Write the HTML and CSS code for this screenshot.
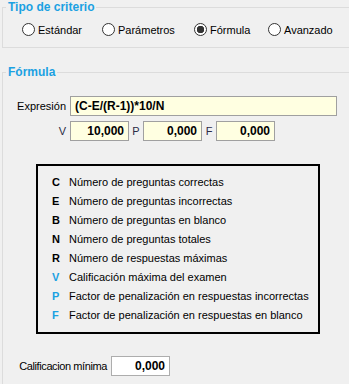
FILE: index.html
```html
<!DOCTYPE html>
<html lang="es">
  <head>
    <title>Criterio de calificación</title>
    <link rel="stylesheet" href="styles.css">
  </head>
  <body>
    <fieldset class="group group-type">
      <legend>Tipo de criterio</legend>
      <div class="radios">
        <label class="radio"><input type="radio" name="tipo" /> Estándar</label>
        <label class="radio"><input type="radio" name="tipo" /> Parámetros</label>
        <label class="radio"><input type="radio" name="tipo" checked /> Fórmula</label>
        <label class="radio"><input type="radio" name="tipo" /> Avanzado</label>
      </div>
    </fieldset>

    <fieldset class="group group-formula">
      <legend>Fórmula</legend>
      <div class="row row-expr">
        <span class="label">Expresión</span>
        <div class="field field-expr">(C-E/(R-1))*10/N</div>
      </div>
      <div class="row row-vars">
        <span class="label label-var">V</span>
        <div class="field field-num">10,000</div>
        <span class="var-label">P</span>
        <div class="field field-num">0,000</div>
        <span class="var-label">F</span>
        <div class="field field-num">0,000</div>
      </div>

      <div class="terms">
        <div class="term"><span class="term-key">C</span>Número de preguntas correctas</div>
        <div class="term"><span class="term-key">E</span>Número de preguntas incorrectas</div>
        <div class="term"><span class="term-key">B</span>Número de preguntas en blanco</div>
        <div class="term"><span class="term-key">N</span>Número de preguntas totales</div>
        <div class="term"><span class="term-key">R</span>Número de respuestas máximas</div>
        <div class="term"><span class="term-key blue">V</span>Calificación máxima del examen</div>
        <div class="term"><span class="term-key blue">P</span>Factor de penalización en respuestas incorrectas</div>
        <div class="term"><span class="term-key blue">F</span>Factor de penalización en respuestas en blanco</div>
      </div>

      <div class="row row-min">
        <span class="label label-min">Calificacion mínima</span>
        <div class="field field-num field-white">0,000</div>
      </div>
    </fieldset>
  </body>
</html>
```

FILE: styles.css
```css
body {
  margin: 0;
  width: 349px;
  height: 384px;
  overflow: hidden;
  background-color: #f0f0f0;
  font-family: "Liberation Sans", Arial, sans-serif;
  font-size: 11px;
  color: #000;
}

.group {
  margin: 0 0 0 2px;
  padding: 0;
  border: 1px solid #dcdcdc;
  width: 360px;
  min-width: 0;
  box-sizing: border-box;
}

.group legend {
  margin-left: 3px;
  padding: 0 2px;
  font: bold 12px/14px "Liberation Sans", Arial, sans-serif;
  color: #1ba1e2;
}

.radios {
  display: grid;
  grid-template-columns: 80px 92px 74px auto;
  padding: 8px 0 10px 19px;
}

.radio {
  display: flex;
  align-items: center;
  gap: 3px;
  height: 15px;
}

.radio input {
  appearance: none;
  margin: 0;
  width: 13px;
  height: 13px;
  border: 1px solid #333;
  border-radius: 50%;
  background-color: #fff;
}

.radio input:checked {
  background: radial-gradient(circle, #333 0 3.5px, #fff 4px);
}

.group-formula {
  margin-top: 17px;
  height: 320px;
}

.row {
  display: flex;
  align-items: center;
}

.row-expr {
  margin-top: 17px;
}

.row-vars {
  margin-top: 5px;
}

.label {
  width: 63px;
  margin-right: 4px;
  text-align: right;
}

.label-var,
.var-label {
  color: #2b2b45;
}

.var-label {
  width: 14px;
  text-align: center;
}

.field {
  height: 20px;
  box-sizing: border-box;
  padding: 0 4px;
  border: 1px solid #a0a0a0;
  background-color: #ffffe1;
  font: bold 12px/18px "Liberation Sans", Arial, sans-serif;
}

.field-expr {
  width: 267px;
}

.field-num {
  width: 59px;
  text-align: right;
}

.field-white {
  background-color: #fff;
  border-color: #adadad;
}

.terms {
  margin: 23px 0 0 33px;
  width: 284px;
  height: 170px;
  box-sizing: border-box;
  padding: 7px 0 0 14px;
  border: 2px solid #000;
}

.term {
  display: flex;
  line-height: 19px;
}

.term-key {
  width: 17px;
  font-weight: bold;
}

.term-key.blue {
  color: #1ba1e2;
}

.row-min {
  margin-top: 22px;
}

.label-min {
  width: 104px;
  letter-spacing: -0.4px;
}
```
